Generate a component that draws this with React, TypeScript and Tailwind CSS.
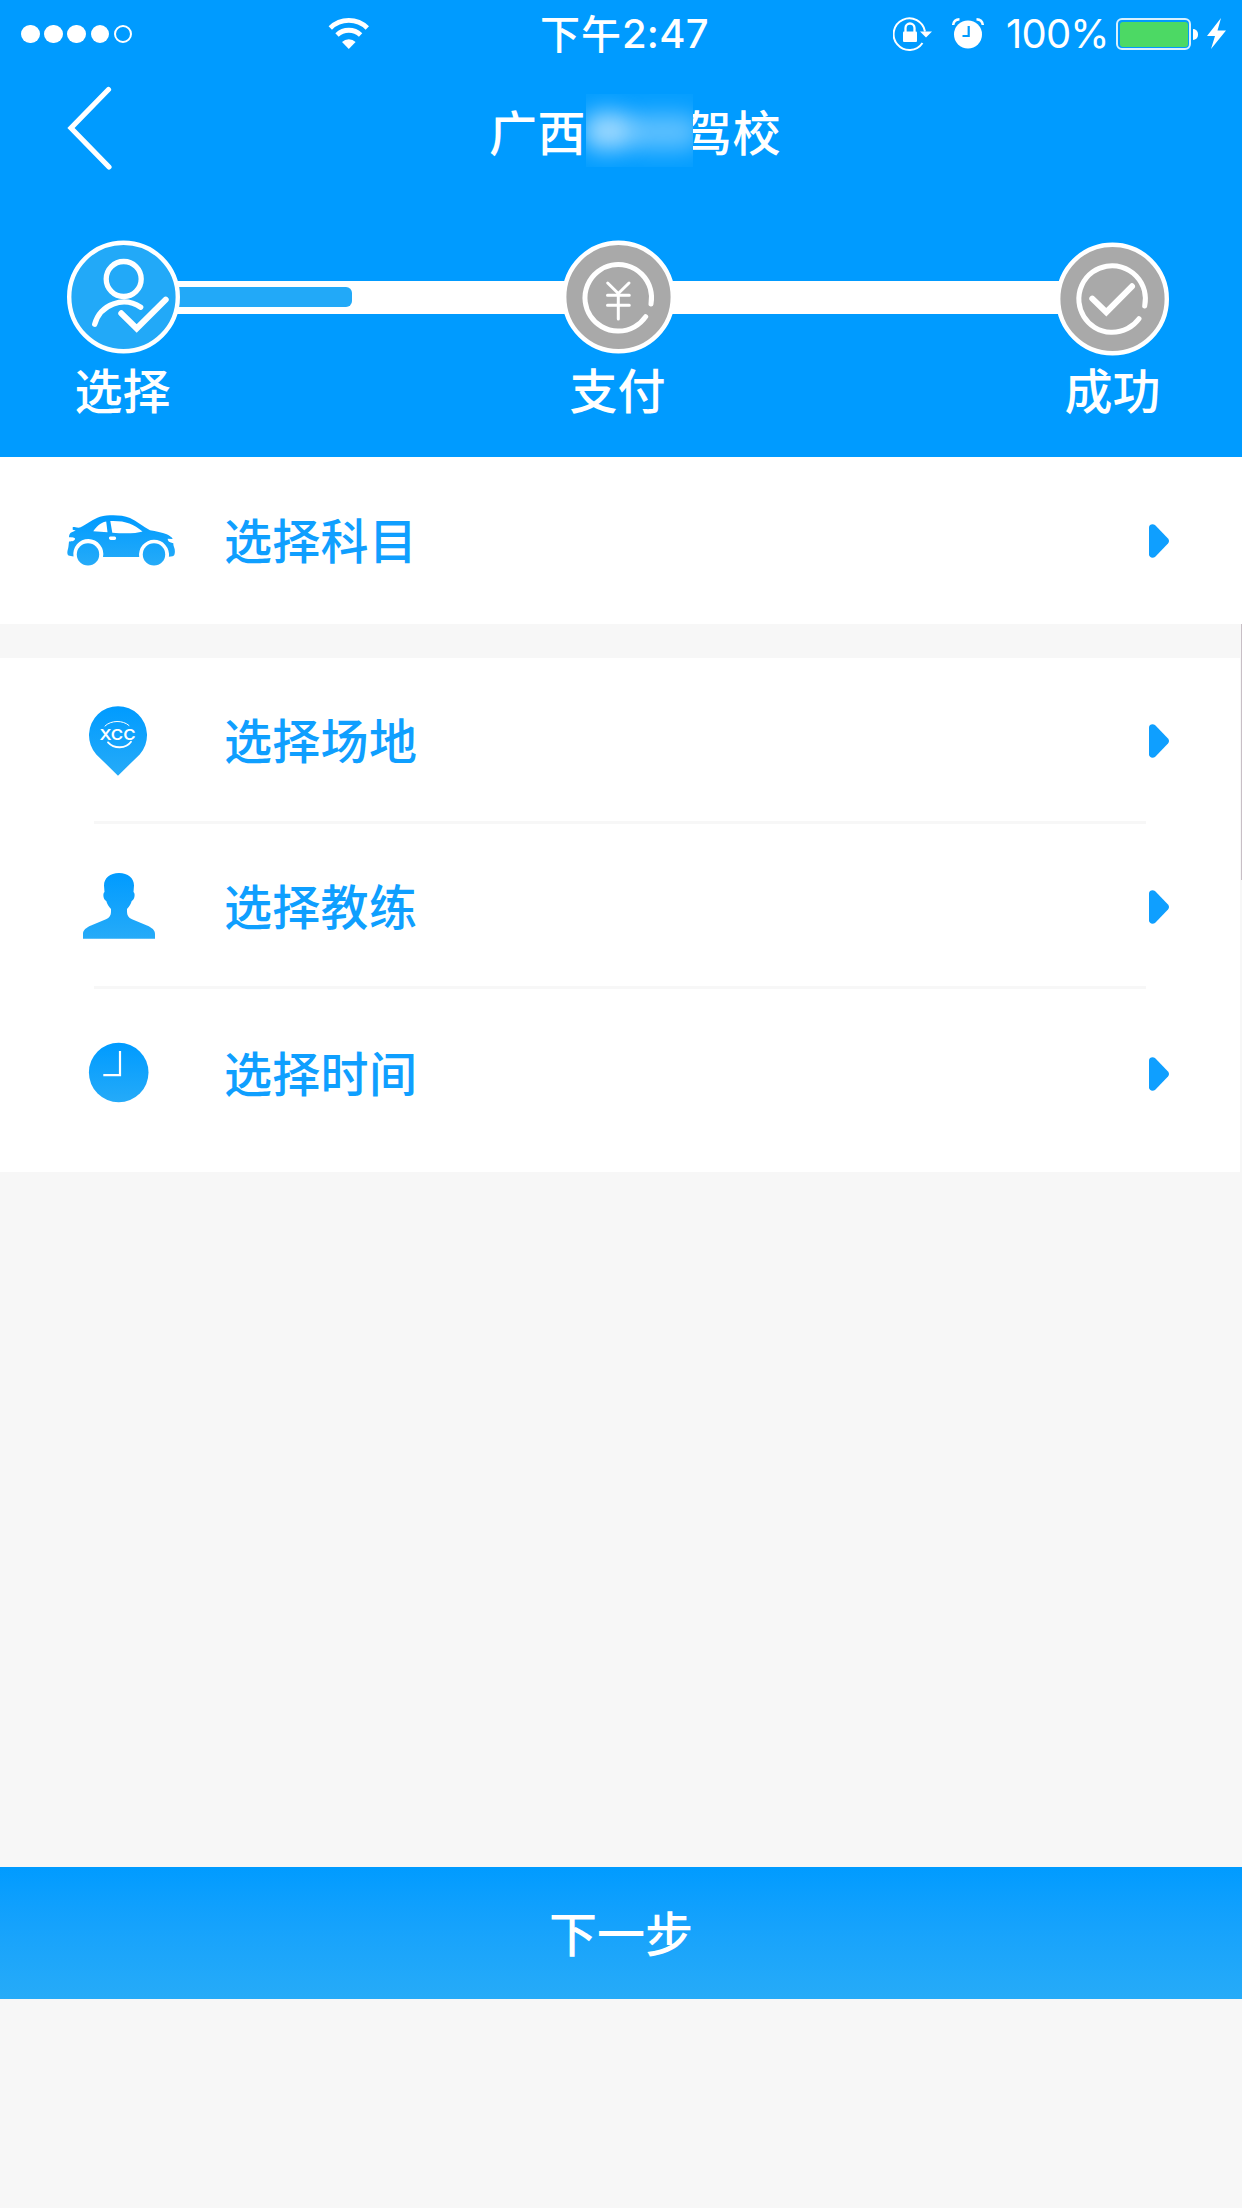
import React, { useState } from 'react';

interface RowProps {
  label: string;
  icon: React.ReactNode;
  className: string;
}

// Dégradé bleu commun à toutes les icônes de la liste
const BlueGradient = ({ id, height }: { id: string; height: number }) => (
  <defs>
    <linearGradient id={id} x1="0" y1="0" x2="0" y2={height} gradientUnits="userSpaceOnUse">
      <stop offset="0" stopColor="#009bff" />
      <stop offset="1" stopColor="#26abf8" />
    </linearGradient>
  </defs>
);

const CarIcon = () => (
  <svg width="109" height="51" viewBox="0 0 109 51">
    <BlueGradient id="car" height={51} />
    <g fill="url(#car)">
      <path
        fillRule="evenodd"
        d="M5.7 12.2C7 11.6 9 13 13 12.6C20 9.5 26 4 33 1.8C37 .6 42 .3 46.3 .3C52 .3 58 .9 63 3C70 6.2 76 11.5 83 15.2C89 16.5 95 17 99.7 19.3C102.5 20.7 104.8 22 105.700 24L100.7 23.8C100.5 26 102.5 27.8 106.3 28.2C106 31 108.2 33 107.9 36.7C107.7 39.5 107.3 40.8 105.5 41.2L101.9 41.8A15 15 0 1 0 72.2 42H36A15 15 0 1 0 6.5 41.5L2.5 40.8C.2 40.4 0 38 .7 35C1.5 33 1.6 30 2 26.5C5 26.4 8 26 8 23.8C8 22.5 5 22.3 2 22.3C2 20.5 2.5 19 3.7 17.7L8.7 15.6L5.7 14.8ZM26.3 16.2C29 12 33 7.5 39.2 6.4L40.5 17.3ZM43.3 6C58 5.5 66 8.5 75.5 16.5C69 18.6 57 18.8 45.3 17.7ZM43.3 21.6H47.5A1.6 1.6 0 0 1 47.5 24.9H43.8C41.5 24.9 41.5 21.6 43.3 21.6Z"
      />
      <circle cx="21" cy="39.4" r="11.2" />
      <circle cx="87" cy="39.4" r="11.2" />
    </g>
  </svg>
);

const PinIcon = () => (
  <svg width="109" height="70" viewBox="-22 0 109 70">
    <BlueGradient id="pin" height={70} />
    <path d="M29 69.7L7.3 48.4A29 29 0 1 1 50.7 48.4Z" fill="url(#pin)" />
    <g fill="none" stroke="#fff" strokeLinecap="round">
      <path d="M16 20C22 14 34 14 40 19.5" strokeWidth="1" />
      <path d="M19 36.3C25 43 37 43 42 35.8" strokeWidth="1.8" />
    </g>
    <text
      x="10.5"
      y="33.500"
      fill="#fff"
      textLength="36"
      lengthAdjust="spacingAndGlyphs"
      className="font-['Inter',sans-serif] text-[15px] font-semibold"
    >
      XCC
    </text>
  </svg>
);

const CoachIcon = () => (
  <svg width="109" height="66" viewBox="-16 0 109 66" className="-mt-[2px]">
    <BlueGradient id="coach" height={66} />
    <path
      d="M36 0C45 0 51 5 51 12.5L50.5 19C52.5 20 51.8 27 48.7 28C48 31 46.5 33 44 36V39C44 42 45.5 44.8 49 46.2L64 52.5C69 54.8 72 57 72 61V65.8H0V61C0 57 3 54.8 8 52.5L23 46.2C26.5 44.8 28 42 28 39V36C25.5 33 24 31 23.3 28C20.2 27 19.5 20 21.5 19L21 12.5C21 5 27 0 36 0Z"
      fill="url(#coach)"
    />
  </svg>
);

const ClockIcon = () => (
  <svg width="109" height="60" viewBox="-22 0 109 60">
    <BlueGradient id="clock" height={60} />
    <circle cx="29.7" cy="28.5" r="29.8" fill="url(#clock)" />
    <path d="M31 7V31.2H14.3" fill="none" stroke="#fff" strokeWidth="2.2" />
  </svg>
);

function SelectRow({ label, icon, className }: RowProps) {
  return (
    <button className={`flex w-full items-center pl-[67px] text-left [&_svg]:overflow-visible ${className}`}>
      <span className="w-[109px] shrink-0">{icon}</span>
      <span className="ml-[48px] flex-1 pb-[6px] text-[48px] leading-none tracking-[0.3px] text-[#0f9fff]">{label}</span>
      <svg width="20" height="34" viewBox="0 0 20 34">
        <path d="M0 3.5C0 .5 3.5 -.5 6 1L19 14.5Q21 17 19 19.500L6 33C3.5 34.5 0 33.5 0 30.5Z" fill="#0f9fff" />
      </svg>
    </button>
  );
}

const Divider = () => <div className="-mt-[3px] ml-[94px] mr-[94px] h-[3px] bg-[#f7f7f7]" />;

function StatusBar() {
  return (
    <div className="flex h-[68px] items-center text-white">
      {/* Signal */}
      <div className="ml-[21px] flex w-[307px] gap-[4.5px]">
        {[0, 1, 2, 3].map((dot) => (
          <span key={dot} className="h-[18.7px] w-[18.7px] rounded-full bg-white" />
        ))}
        <span className="h-[18.7px] w-[18.7px] rounded-full border-2 border-white" />
      </div>
      <svg width="42" height="32" viewBox="0 0 42 32" fill="none" stroke="#fff" strokeWidth="4.8">
        <path d="M2.3 10A26.500 26.500 0 0 1 39.3 10" />
        <path d="M9 17A17 17 0 0 1 32.6 17" />
        <path d="M20.8 31L14 24A9.6 9.6 0 0 1 27.6 24Z" fill="#fff" stroke="none" />
      </svg>

      <div className="ml-[170px] flex w-[353px] items-center text-[40px] leading-none font-medium">
        <span className="pb-[4px] tracking-[1px]">下午</span>
        <span className="font-['Inter','Noto_Sans_CJK_SC',sans-serif] tracking-[0.2px]">2:47</span>
      </div>

      {/* Verrouillage rotation + alarme */}
      <svg width="40" height="34" viewBox="0 0 40 34" fill="none" stroke="#fff" strokeWidth="2">
        <path d="M29.5 26A15.800 15.800 0 1 1 32 14.500" />
        <path d="M27 14.5H39L33 20.5Z" fill="#fff" stroke="none" />
        <rect x="10" y="14.5" width="14" height="10.5" rx="1" fill="#fff" stroke="none" />
        <path d="M12.5 15V11A4.5 4.5 0 0 1 21.5 11V15" strokeWidth="2.3" />
      </svg>
      <svg width="32" height="32" viewBox="0 0 32 32" className="ml-[19px]" fill="none">
        <circle cx="16" cy="16.5" r="14" fill="#fff" />
        <path d="M16.7 8V18H10.5" stroke="#009bff" strokeWidth="2.2" />
        <path d="M1.2 7C1.5 3.5 4 1.5 7.5 1.300M30.800 7C30.5 3.5 28 1.500 24.5 1.300" stroke="#fff" strokeWidth="2.5" />
      </svg>
      <span className="ml-[22px] w-[110px] font-['Inter',sans-serif] text-[40px] leading-none font-normal tracking-[-0.8px]">
        100%
      </span>

      {/* Batterie */}
      <div className="h-[32px] w-[75px] shrink-0 rounded-[6px] border-2 border-[#d8f0ff] p-[1.5px]">
        <div className="h-full w-full rounded-[3px] bg-[#4cd964]" />
      </div>
      <span className="ml-[1.5px] h-[11px] w-[5px] shrink-0 rounded-r-full bg-white" />
      <svg width="20" height="32" viewBox="0 0 20 32" className="ml-[9px] shrink-0">
        <path d="M14 0L0 18H8L4 31L19 12.5H10.5Z" fill="#fff" />
      </svg>
    </div>
  );
}

function TitleBar() {
  return (
    <div className="flex h-[134px] items-start pl-[67px]">
      <button className="mt-[18px] w-[422px]">
        <svg width="46" height="84" viewBox="0 0 46 84" fill="none">
          <path d="M41.5 3.5L4 42L42 81" stroke="#fff" strokeWidth="5.2" strokeLinecap="round" />
        </svg>
      </button>
      <h1 className="flex items-center pt-[26px] text-[48px] leading-[73px] font-medium text-white">
        <span className="tracking-[0.5px]">广西</span>
        {/* Nom de l'école masqué */}
        <span className="relative z-10 -mr-[9px] h-[73px] w-[107px] overflow-hidden bg-[#059eff]">
          <span className="absolute top-[18px] left-[-2px] h-[38px] w-[48px] rounded-2xl bg-white/60 blur-[11px]" />
          <span className="absolute top-[20px] left-[40px] h-[36px] w-[74px] rounded-2xl bg-white/35 blur-[11px]" />
        </span>
        <span className="tracking-[0.5px]">驾校</span>
      </h1>
    </div>
  );
}

function Steps() {
  return (
    <div className="pt-[38px] pr-[73px] pl-[67px] text-white">
      <div className="flex items-center">
        <svg width="113" height="114" viewBox="0 0 113 114" fill="none" className="z-10 shrink-0" stroke="#fff" strokeWidth="5.3" strokeLinecap="round">
          <circle cx="56.5" cy="57" r="54.3" fill="#22a9f8" strokeWidth="4.4" />
          <circle cx="56.7" cy="39" r="17.5" />
          <path d="M27.7 84.3A30.2 30.2 0 0 1 73.7 67.3" />
          <path d="M54.3 73.3L69.7 88.5L98.7 59.7" strokeWidth="6" />
        </svg>
        <div className="-mx-[6px] flex h-[33px] flex-1 items-center bg-white">
          <div className="h-[20px] w-[178px] rounded-r-[6px] bg-[#22a9f8]" />
        </div>
        <svg width="113" height="114" viewBox="0 0 113 114" fill="none" className="z-10 shrink-0" stroke="#fff" strokeWidth="5" strokeLinecap="round">
          <circle cx="56.5" cy="57" r="54.3" fill="#a9a9a9" strokeWidth="4.4" />
          <path d="M89 64A33.3 33.3 0 1 0 83.7 76.7" />
          <path d="M45.7 43L56.3 53.5L67 43M56.3 53.5V79M45.5 55.3H67.3M45.5 65.3H67.3" strokeWidth="3" />
        </svg>
        <div className="-mx-[6px] h-[33px] flex-1 bg-white" />
        <svg width="113" height="114" viewBox="0 0 113 114" fill="none" className="z-10 -mb-[4px] shrink-0" stroke="#fff" strokeWidth="5" strokeLinecap="round">
          <circle cx="56.5" cy="57" r="54.3" fill="#a9a9a9" strokeWidth="4.4" />
          <path d="M88.7 64A33.3 33.3 0 1 0 83 76.7" />
          <path d="M36.3 56.7L50.3 70.2L76 44.3" strokeWidth="6" />
        </svg>
      </div>
      <div className="mt-[10px] -ml-[1px] flex justify-between text-[48px] leading-none">
        {['选择', '支付', '成功'].map((step) => (
          <span key={step} className="w-[113px] text-center">{step}</span>
        ))}
      </div>
    </div>
  );
}

export default function App() {
  const [rows] = useState([
    { label: '选择场地', icon: <PinIcon />, className: 'h-[166px] pr-[71px]' },
    { label: '选择教练', icon: <CoachIcon />, className: 'h-[165px] pr-[71px]' },
    { label: '选择时间', icon: <ClockIcon />, className: 'h-[183px] pb-[13px] pr-[71px]' },
  ]);

  return (
    <div className="relative flex h-[2208px] w-[1242px] flex-col overflow-hidden bg-[#f7f7f7] font-['Noto_Sans_CJK_SC',sans-serif] font-medium">
      <header className="h-[457px] shrink-0 bg-[#009bff]">
        <StatusBar />
        <TitleBar />
        <Steps />
      </header>

      <section className="bg-white">
        <SelectRow label="选择科目" icon={<CarIcon />} className="h-[167px] pr-[73px]" />
      </section>

      <section className="mt-[34px] mr-[2px] bg-white">
        {rows.map((row, index) => (
          <React.Fragment key={row.label}>
            <SelectRow {...row} />
            {index < rows.length - 1 && <Divider />}
          </React.Fragment>
        ))}
      </section>

      <button className="mt-[695px] h-[132px] shrink-0 bg-linear-to-b from-[#009bff] to-[#26abf8] pb-[4px] text-[48px] leading-none text-white">
        下一步
      </button>

      {/* Indicateur de défilement */}
      <div className="absolute top-[624px] right-0 h-[256px] w-px bg-[#c8bfc6]" />
    </div>
  );
}
